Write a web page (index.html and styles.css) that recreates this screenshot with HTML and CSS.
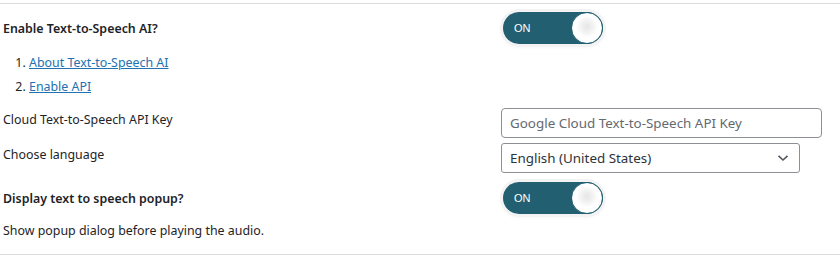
FILE: index.html
```html
<!DOCTYPE html>
<html lang="en">
<head>
    <meta charset="UTF-8">
    <title>Text-to-Speech settings</title>
    <link rel="stylesheet" href="styles.css">
</head>
<body>
    <div class="settings">
        <div class="row row-main">
            <div class="label strong">Enable Text-to-Speech AI?</div>
            <div class="field">
                <span class="switch"><span class="switch-text">ON</span><span class="knob"></span></span>
            </div>
        </div>
        <ol class="steps">
            <li><a href="#">About Text-to-Speech AI</a></li>
            <li><a href="#">Enable API</a></li>
        </ol>
        <div class="row row-key">
            <div class="label">Cloud Text-to-Speech API Key</div>
            <div class="field">
                <input type="text" class="text-input" placeholder="Google Cloud Text-to-Speech API Key">
            </div>
        </div>
        <div class="row row-lang">
            <div class="label">Choose language</div>
            <div class="field">
                <div class="select">
                    <span>English (United States)</span>
                    <svg class="chevron" width="12" height="8" viewBox="0 0 12 8"><path d="M1.5 1.8 L6 6 L10.5 1.8" fill="none" stroke="#50575e" stroke-width="1.6"/></svg>
                </div>
            </div>
        </div>
        <div class="row row-popup">
            <div class="label strong">Display text to speech popup?</div>
            <div class="field">
                <span class="switch"><span class="switch-text">ON</span><span class="knob"></span></span>
            </div>
        </div>
        <p class="desc">Show popup dialog before playing the audio.</p>
    </div>
</body>
</html>
```

FILE: styles.css
```css
body {
    margin: 0;
    background: #fff;
    font-family: "Noto Sans", "Open Sans", sans-serif;
    font-size: 12.4px;
    color: #1d2327;
}
.settings {
    margin-top: 3px;
    border-top: 1px solid #dcdcde;
    border-bottom: 1px solid #dcdcde;
    height: 252px;
    box-sizing: border-box;
    padding-left: 3px;
}
.row {
    display: grid;
    grid-template-columns: 498px 1fr;
    align-items: center;
}
.row-main {
    height: 46px;
    padding-top: 1px;
}
.label.strong {
    font-weight: 600;
}
.steps {
    margin: 0;
    padding-left: 26px;
    line-height: 24px;
    height: 53px;
    padding-top: 0;
}
.steps a {
    color: #2271b1;
}
.row-key {
    height: 34px;
    padding-top: 2px;
}
.row-key .label {
    margin-top: -8px;
}
.text-input {
    width: 321px;
    height: 30px;
    box-sizing: border-box;
    border: 1px solid #8c8f94;
    border-radius: 4px;
    padding: 0 8px;
    font-family: inherit;
    font-size: 13.4px;
    color: #2c3338;
}
.text-input::placeholder {
    color: #646970;
}
.row-lang {
    height: 36px;
}
.row-lang .label {
    margin-top: -8px;
}
.select {
    width: 299px;
    height: 30px;
    box-sizing: border-box;
    border: 1px solid #8c8f94;
    border-radius: 3px;
    padding: 0 8px;
    font-size: 13.4px;
    color: #2c3338;
    display: flex;
    align-items: center;
    justify-content: space-between;
}
.chevron {
    margin-right: 2px;
}
.row-popup {
    height: 44px;
}
.switch {
    position: relative;
    display: inline-flex;
    align-items: center;
    margin-left: 2px;
    width: 100px;
    height: 32px;
    box-sizing: border-box;
    border-radius: 16px;
    background: #225f70;
    box-shadow: 0 0 0 3px #f3f3f4, 0 2px 5px rgba(0,0,0,0.08);
}
.switch-text {
    color: #fff;
    font-size: 11px;
    padding-left: 11px;
    font-family: "Liberation Sans", Arial, sans-serif;
}
.knob {
    position: absolute;
    right: 0;
    top: 0;
    width: 32px;
    height: 32px;
    box-sizing: border-box;
    border-radius: 50%;
    border: 1px solid #225f70;
    background: radial-gradient(circle at 50% 45%, #e6e6e6 0, #f2f2f2 6px, #fff 11px);
}
.desc {
    margin: 0;
    line-height: 22px;
}
```
